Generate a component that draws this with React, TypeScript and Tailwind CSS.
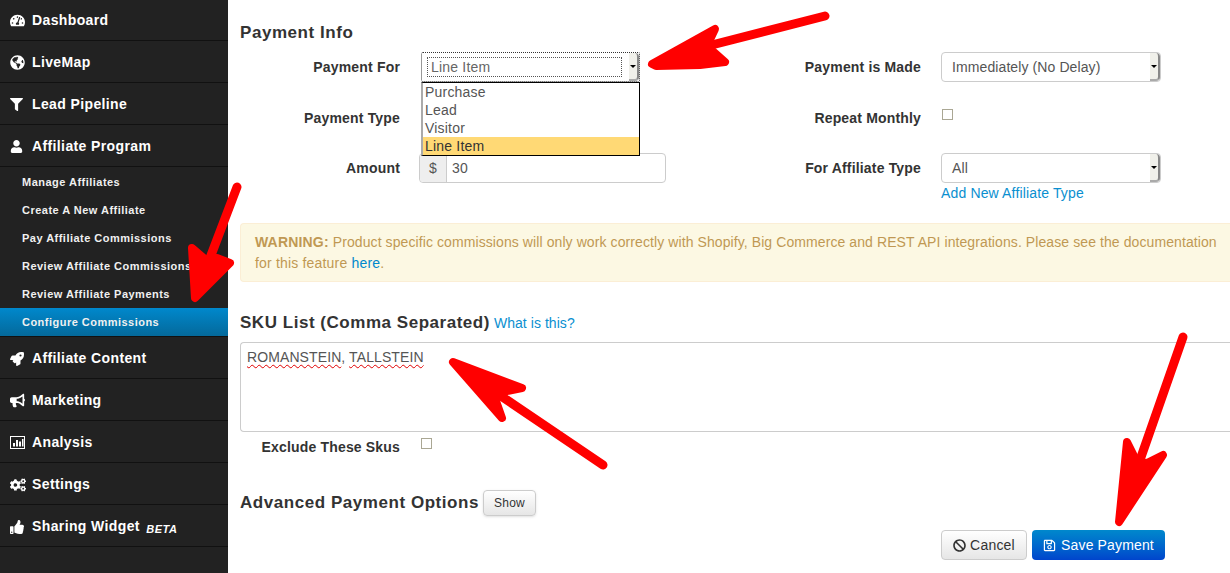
import {
  FaTachometerAlt,
  FaGlobeAmericas,
  FaFilter,
  FaUser,
  FaRocket,
  FaBullhorn,
  FaCogs,
  FaThumbsUp,
  FaBan,
  FaRegSave,
} from 'react-icons/fa';
import type { ReactNode } from 'react';

// framed bar chart, font awesome 4 style
function ChartIcon() {
  return (
    <svg width="15" height="13" viewBox="0 0 15 13" fill="none">
      <rect x="0.5" y="0.5" width="14" height="12" fill="none" stroke="currentColor" />
      <rect x="3" y="7" width="2" height="3.5" fill="currentColor" />
      <rect x="6" y="4" width="2" height="6.5" fill="currentColor" />
      <rect x="9" y="5.5" width="2" height="5" fill="currentColor" />
      <rect x="12" y="3" width="1.5" height="7.5" fill="currentColor" />
    </svg>
  );
}

function NavItem({ icon, children }: { icon: ReactNode; children: ReactNode }) {
  return (
    <div className="flex items-center h-[42px] pt-[2px] border-b border-[#111] text-white font-bold text-[14px] tracking-[0.38px]">
      <span className="w-[32px] pl-[10px] flex items-center text-[15px] shrink-0">{icon}</span>
      <span>{children}</span>
    </div>
  );
}

function SubItem({ children, active }: { children: ReactNode; active?: boolean }) {
  return (
    <div
      className={`flex items-center h-[28px] pl-[22px] text-[11px] font-bold tracking-[0.48px] text-[#f0f0f0] whitespace-nowrap ${
        active ? 'bg-gradient-to-b from-[#0088cc] to-[#04699b]' : ''
      }`}
    >
      {children}
    </div>
  );
}

function FakeSelect({ value }: { value: string }) {
  return (
    <div className="relative w-[220px] h-[30px] border border-[#ccc] rounded-[4px] bg-white flex items-center pl-[10px] text-[14px] text-[#555] tracking-[0.1px]">
      {value}
      <Caret />
    </div>
  );
}

function Caret() {
  return (
    <span className="absolute right-0 top-0 bottom-0 w-[10px] bg-[#f0f0ea] border-r-2 border-b-2 border-r-[#888] border-b-[#aaa] rounded-r-[4px] flex items-center justify-center">
      <span className="w-0 h-0 border-l-[3px] border-r-[3px] border-t-[3px] border-l-transparent border-r-transparent border-t-black" />
    </span>
  );
}

function Check() {
  return <span className="block w-[11px] h-[11px] border border-[#aaa794] bg-white" />;
}

function Label({ children }: { children: ReactNode }) {
  return <span className="text-[14px] font-bold text-[#333] tracking-[0.17px] text-right whitespace-nowrap">{children}</span>;
}

const squiggle = "underline decoration-wavy decoration-[#e00000] decoration-1 underline-offset-2";

export default function App() {
  return (
    <div className="relative flex w-[1230px] h-[573px] overflow-hidden bg-white font-['Liberation_Sans',Arial,sans-serif]">
      {/* sidebar */}
      <aside className="w-[228px] shrink-0 bg-[#222]">
        <div className="-mt-[1px]">
          <NavItem icon={<FaTachometerAlt />}>Dashboard</NavItem>
          <NavItem icon={<FaGlobeAmericas />}>LiveMap</NavItem>
          <NavItem icon={<FaFilter size={13} />}>Lead Pipeline</NavItem>
          <NavItem icon={<FaUser size={13} />}>Affiliate Program</NavItem>
          <div className="pt-[1px] border-b border-[#111]">
            <SubItem>Manage Affiliates</SubItem>
            <SubItem>Create A New Affiliate</SubItem>
            <SubItem>Pay Affiliate Commissions</SubItem>
            <SubItem>Review Affiliate Commissions</SubItem>
            <SubItem>Review Affiliate Payments</SubItem>
            <SubItem active>Configure Commissions</SubItem>
          </div>
          <NavItem icon={<FaRocket size={14} />}>Affiliate Content</NavItem>
          <NavItem icon={<FaBullhorn size={15} />}>Marketing</NavItem>
          <NavItem icon={<ChartIcon />}>Analysis</NavItem>
          <NavItem icon={<FaCogs size={16} />}>Settings</NavItem>
          <NavItem icon={<FaThumbsUp size={14} />}>
            Sharing Widget <i className="text-[11px] ml-[2px] relative top-[2px] tracking-[0.6px]">BETA</i>
          </NavItem>
        </div>
      </aside>

      {/* main */}
      <main className="flex-1 min-w-0 pl-[12px] text-[#333]">
        <h2 className="text-[17px] leading-[20px] font-bold text-[#333] tracking-[0.55px] mt-[23px]">Payment Info</h2>

        <div className="flex mt-[9px]">
          {/* left form column */}
          <div className="w-[426px] shrink-0">
            <div className="flex items-center h-[30px]">
              <div className="w-[160px] flex justify-end"><Label>Payment For</Label></div>
            </div>
            <div className="flex items-center h-[30px] mt-[21px]">
              <div className="w-[160px] flex justify-end"><Label>Payment Type</Label></div>
            </div>
            <div className="flex items-center h-[30px] mt-[20px]">
              <div className="w-[160px] flex justify-end"><Label>Amount</Label></div>
              <div className="ml-[19px] flex h-[30px] w-[247px] border border-[#ccc] rounded-[4px] text-[14px] text-[#555] tracking-[0.2px]">
                <span className="w-[27px] flex items-center justify-center bg-[#eee] border-r border-[#ccc] rounded-l-[4px]">$</span>
                <span className="pl-[5px] flex items-center">30</span>
              </div>
            </div>
          </div>

          {/* right form column */}
          <div className="ml-[142px]">
            <div className="flex items-center h-[30px]">
              <div className="w-[141px] flex justify-end -ml-[28px]"><Label>Payment is Made</Label></div>
              <div className="ml-[20px]"><FakeSelect value="Immediately (No Delay)" /></div>
            </div>
            <div className="flex h-[30px] mt-[21px]">
              <div className="w-[141px] flex justify-end -ml-[28px] items-center"><Label>Repeat Monthly</Label></div>
              <div className="ml-[21px] pt-[6px]"><Check /></div>
            </div>
            <div className="flex items-center h-[30px] mt-[20px]">
              <div className="w-[141px] flex justify-end -ml-[28px]"><Label>For Affiliate Type</Label></div>
              <div className="ml-[20px]"><FakeSelect value="All" /></div>
            </div>
            <div className="ml-[133px] text-[14px] leading-[20px] text-[#0a8fd0] tracking-[0.15px]">Add New Affiliate Type</div>
          </div>
        </div>

        {/* warning */}
        <div className="mt-[20px] h-[59px] border border-[#fbeed5] border-r-0 rounded-l-[4px] bg-[#fcf8e3] pl-[14px] pt-[8px] text-[14px] leading-[21px] text-[#c09853] tracking-[0.09px] whitespace-nowrap">
          <b className="tracking-[0.18px]">WARNING:</b> Product specific commissions will only work correctly with Shopify, Big Commerce and REST API integrations. Please see the documentation
          <br />
          <span className="tracking-[0.18px]">for this feature <span className="text-[#0088cc]">here</span>.</span>
        </div>

        {/* sku list */}
        <div className="mt-[31px] flex items-baseline">
          <h3 className="text-[17px] leading-[20px] font-bold text-[#333] tracking-[0.53px]">SKU List (Comma Separated)</h3>
          <span className="ml-[4px] text-[14px] text-[#0a8fd0] tracking-[0.05px]">What is this?</span>
        </div>
        <div className="mt-[8px] h-[90px] border border-[#ccc] border-r-0 rounded-l-[4px] pl-[6px] pt-[4px] text-[14px] text-[#555] tracking-[0.1px]">
          <span className={squiggle}>ROMANSTEIN</span>, <span className={squiggle}>TALLSTEIN</span>
        </div>

        <div className="flex h-[30px]">
          <div className="w-[160px] flex justify-end items-center"><Label>Exclude These Skus</Label></div>
          <div className="ml-[21px] pt-[6px]"><Check /></div>
        </div>

        <div className="flex items-center mt-[27px]">
          <h3 className="text-[17px] leading-[24px] font-bold text-[#333] tracking-[0.55px]">Advanced Payment Options</h3>
          <button className="ml-[4px] mt-[1px] w-[53px] h-[26px] border border-[#ccc] rounded-[4px] bg-gradient-to-b from-white to-[#e6e6e6] text-[12px] text-[#333] tracking-[0.2px] shadow-sm">Show</button>
        </div>

        <div className="flex justify-end gap-[5px] mt-[14px] pr-[65px]">
          <button className="w-[86px] h-[30px] border border-[#ccc] rounded-[4px] bg-gradient-to-b from-white to-[#e6e6e6] text-[14px] text-[#333] flex items-center justify-center gap-[4px] tracking-[0.2px]">
            <FaBan size={13} />Cancel
          </button>
          <button className="w-[133px] h-[30px] rounded-[4px] bg-gradient-to-b from-[#0088cc] to-[#0044cc] text-[14px] text-white flex items-center justify-center gap-[5px] tracking-[0.15px]">
            <FaRegSave size={13} />Save Payment
          </button>
        </div>
      </main>

      {/* open dropdown */}
      <div className="absolute left-[421px] top-[52px] w-[219px]">
        <div className="relative h-[30px] bg-white border border-dotted border-[#333] rounded-[2px] pl-[5px] pt-[4px]">
          <div className="h-[20px] w-[195px] border border-dotted border-[#555] flex items-center pl-[3px] text-[14px] text-[#666] tracking-[0.2px]">Line Item</div>
          <Caret />
        </div>
        <div className="border border-black border-l-2 border-l-[#aaa] bg-white text-[14px] leading-[18px] text-[#555] tracking-[0.2px]">
          <div className="pl-[2px]">Purchase</div>
          <div className="pl-[2px]">Lead</div>
          <div className="pl-[2px]">Visitor</div>
          <div className="pl-[2px] bg-[#ffd975] text-[#333]">Line Item</div>
        </div>
      </div>

      {/* red annotation arrows */}
      <svg className="absolute inset-0 pointer-events-none" width="1230" height="573" fill="#ff0000" stroke="#ff0000" strokeLinejoin="round" strokeLinecap="round">
        <path d="M825 16 L700 48" strokeWidth="9" fill="none" />
        <path d="M652 64 L715 29 L707 46 L725 62 L700 65 L656 66 Z" strokeWidth="8" />
        <path d="M237 187 L210 258" strokeWidth="9" fill="none" />
        <path d="M195 298 L192 248 L206 260 L217 258 L230 263 Z" strokeWidth="8" />
        <path d="M603 465 L498 394" strokeWidth="9" fill="none" />
        <path d="M453 362 L522 388 L502 392 L495 398 L502 418 Z" strokeWidth="8" />
        <path d="M1183 337 L1140 460" strokeWidth="9" fill="none" />
        <path d="M1119 522 L1127 442 L1137 462 L1147 463 L1163 455 Z" strokeWidth="8" />
      </svg>
    </div>
  );
}
